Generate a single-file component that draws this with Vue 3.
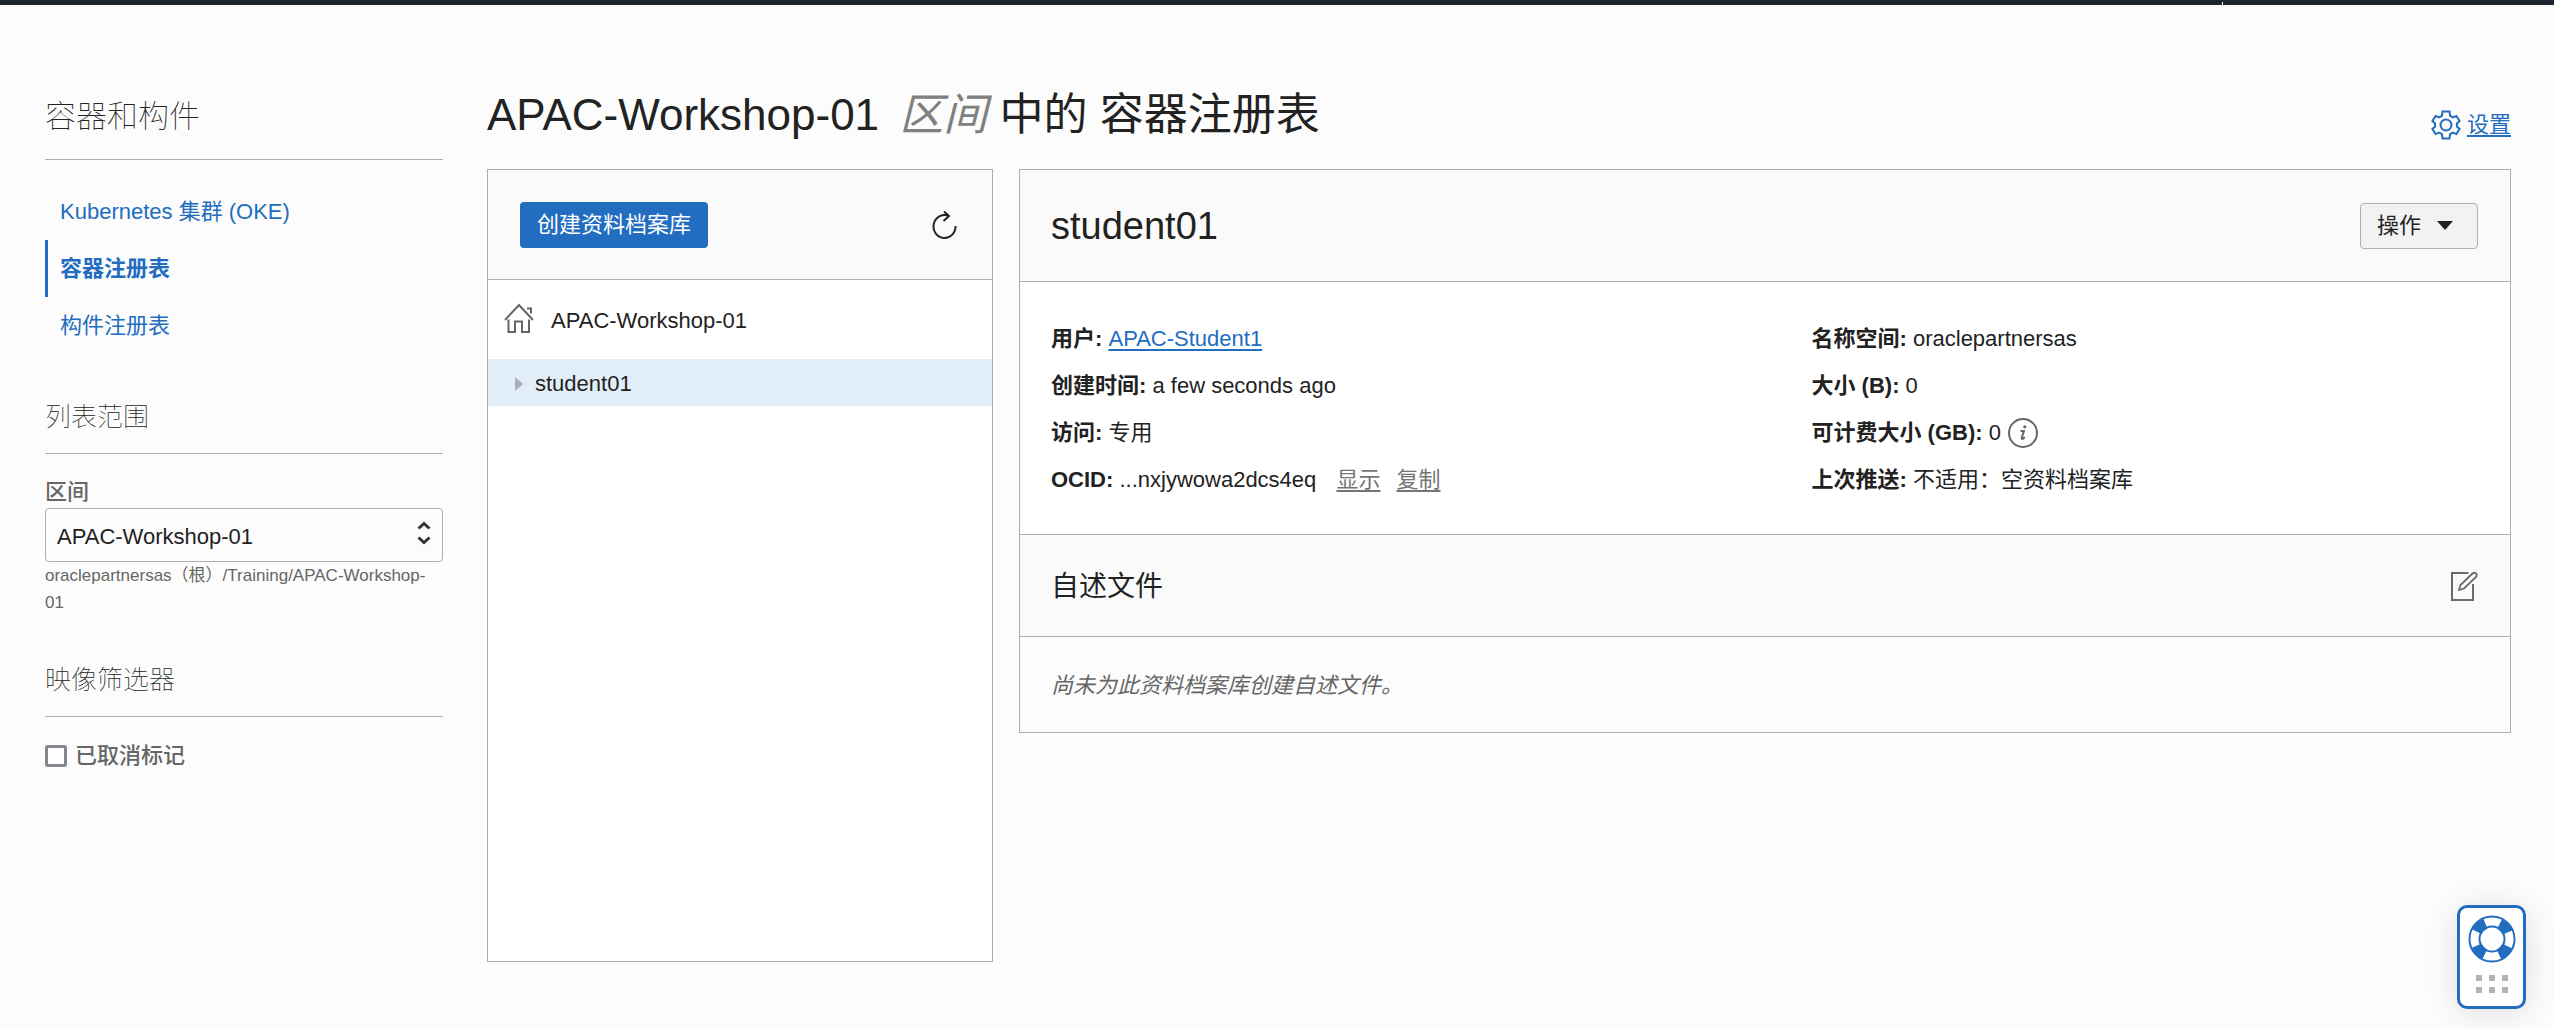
<script setup>
import { ref } from 'vue'

const services = [
  { label: 'Kubernetes 集群 (OKE)', active: false },
  { label: '容器注册表', active: true },
  { label: '构件注册表', active: false },
]
const compartments = ['APAC-Workshop-01']
const compartment = ref(compartments[0])
const untagged = ref(false)
</script>

<template>
  <div class="topbar"><span class="topbar-mark"></span></div>
  <div class="layout">
    <aside class="sidebar">
      <h2 class="side-title">容器和构件</h2>
      <nav class="side-nav">
        <a v-for="item in services" :key="item.label" href="#" :class="{ active: item.active }">{{ item.label }}</a>
      </nav>

      <h3 class="side-heading">列表范围</h3>
      <label class="field-label" for="compartment">区间</label>
      <div class="select-wrap">
        <select id="compartment" v-model="compartment">
          <option v-for="name in compartments" :key="name">{{ name }}</option>
        </select>
        <svg class="select-icon" width="14" height="24" viewBox="0 0 14 24" fill="none" stroke="#333" stroke-width="3">
          <path d="M1.500 7.500 7 2.500l5.500 5M1.500 16.500l5.500 5 5.500-5" />
        </svg>
      </div>
      <p class="hint">oraclepartnersas（根）/Training/APAC-Workshop-01</p>

      <h3 class="side-heading filters">映像筛选器</h3>
      <label class="check"><input v-model="untagged" type="checkbox" />已取消标记</label>
    </aside>

    <main class="main">
      <header class="page-head">
        <h1>APAC-Workshop-01 <em>区间</em> 中的 容器注册表</h1>
        <a class="settings" href="#">
          <svg width="30" height="30" viewBox="0 0 30 30" fill="none" stroke="#226dbf" stroke-width="2">
            <path d="M11.500 1.500h7l.6 4.400 2.800 1.500 3.500-1.500 3.200 5.200-2.700 2.300v3.200l2.700 2.300-3.200 5.200-3.500-1.500-2.800 1.500-.6 4.400h-7l-.6-4.400-2.800-1.500-3.500 1.500-3.200-5.200 2.700-2.300v-3.200l-2.700-2.300 3.200-5.200 3.500 1.500 2.800-1.500z" />
            <circle cx="15" cy="15" r="5.500" />
          </svg>
          <span>设置</span>
        </a>
      </header>

      <div class="panels">
        <section class="panel tree">
          <div class="tree-head">
            <button class="primary" type="button">创建资料档案库</button>
            <button class="icon-button" type="button" aria-label="刷新">
              <svg width="26" height="30" viewBox="0 0 26 30" fill="none" stroke="#222" stroke-width="2">
                <path d="M23.500 16A11 11.500 0 1 1 17 6M12 1.500l5 4.500-5.500 5" />
              </svg>
            </button>
          </div>
          <div class="tree-root">
            <svg width="30" height="30" viewBox="0 0 30 30" fill="none" stroke="#666" stroke-width="2">
              <path d="M1 17 15 2l14 15M23 5.500h4v5M4.500 16.500V29h6.500V18.500h7V29h7V16.500" />
            </svg>
            <span>APAC-Workshop-01</span>
          </div>
          <div class="tree-row">
            <svg width="8" height="14" viewBox="0 0 8 14" fill="#a8b1ba"><path d="M0 0l8 7-8 7z" /></svg>
            <span>student01</span>
          </div>
        </section>

        <section class="panel detail">
          <div class="detail-head">
            <h2>student01</h2>
            <button class="secondary" type="button">
              操作
              <svg width="16" height="9" viewBox="0 0 16 9" fill="#222"><path d="M0 0h16L8 9z" /></svg>
            </button>
          </div>
          <div class="facts">
            <div class="fact-col">
              <p><b>用户:</b> <a href="#">APAC-Student1</a></p>
              <p><b>创建时间:</b> a few seconds ago</p>
              <p><b>访问:</b> 专用</p>
              <p><b>OCID:</b> ...nxjywowa2dcs4eq <a class="muted" href="#">显示</a><a class="muted" href="#">复制</a></p>
            </div>
            <div class="fact-col">
              <p><b>名称空间:</b> oraclepartnersas</p>
              <p><b>大小 (B):</b> 0</p>
              <p class="with-icon">
                <span><b>可计费大小 (GB):</b> 0</span>
                <svg width="30" height="30" viewBox="0 0 30 30" fill="none" stroke="#666">
                  <circle cx="15" cy="15" r="14" stroke-width="2" />
                  <path d="M12.500 13h3.500l-2.200 6.500q-.4 1.800 1 1.300 1-.4 2-1.600" stroke-width="2" />
                  <circle cx="16.800" cy="8.800" r="1.600" fill="#666" stroke="none" />
                </svg>
              </p>
              <p><b>上次推送:</b> 不适用：空资料档案库</p>
            </div>
          </div>
          <div class="readme-head">
            <h3>自述文件</h3>
            <button class="icon-button" type="button" aria-label="编辑">
              <svg width="28" height="30" viewBox="0 0 28 30" fill="none" stroke="#6a6a6a" stroke-width="2">
                <path d="M18.500 2H2v27h21V13" />
                <path d="m9 19 1.500-5L22.500 2.500q2-1.500 3.500 0t0 3.500L14 17.500z" stroke-width="1.800" />
              </svg>
            </button>
          </div>
          <p class="readme-body">尚未为此资料档案库创建自述文件。</p>
        </section>
      </div>
    </main>
  </div>

  <button class="help" type="button" aria-label="帮助">
    <svg width="48" height="48" viewBox="0 0 48 48" fill="none" stroke="#226dbf">
      <circle cx="24" cy="24" r="17" stroke-width="11" stroke-dasharray="12 14.704" stroke-dashoffset="-7.352" />
      <circle cx="24" cy="24" r="22.500" stroke-width="2" />
      <circle cx="24" cy="24" r="12.500" stroke-width="2" />
    </svg>
    <span class="dots"><i v-for="n in 6" :key="n"></i></span>
  </button>
</template>

<style>
body {
  margin: 0;
  background: #fcfcfc;
}
</style>

<style scoped>
* {
  box-sizing: border-box;
}
.topbar,
.layout,
.help {
  font-family: "Liberation Sans", "Noto Sans CJK SC", sans-serif;
  font-size: 22px;
  line-height: 32px;
  color: #222;
}
h1,
h2,
h3,
p {
  margin: 0;
  font-weight: 400;
}
svg {
  display: block;
  flex: none;
}
button,
select {
  font: inherit;
  color: inherit;
}
a {
  color: #226dbf;
}
.topbar {
  display: flex;
  align-items: flex-end;
  justify-content: flex-end;
  height: 5px;
  padding-right: 331px;
  background: #1c242d;
}
.topbar-mark {
  width: 1px;
  height: 3px;
  background: #fff;
}
.layout {
  display: flex;
  gap: 44px;
  padding: 75px 43px 64px 45px;
}
.sidebar {
  flex: none;
  width: 398px;
}
.side-title {
  padding: 15px 0 20px;
  border-bottom: 1px solid #b0b0b0;
  font-size: 31px;
  font-weight: 100;
  line-height: 44px;
  color: #222;
}
.side-nav {
  display: flex;
  flex-direction: column;
  padding: 23px 0 31px;
}
.side-nav a {
  padding: 13px 0 12px 12px;
  border-left: 3px solid transparent;
  text-decoration: none;
}
.side-nav a.active {
  border-left-color: #226dbf;
  font-weight: 700;
}
.side-heading {
  padding: 12px 0 16px;
  border-bottom: 1px solid #a8b1ba;
  font-size: 26px;
  font-weight: 100;
  line-height: 40px;
  color: #222;
}
.field-label {
  display: block;
  padding-top: 22px;
  font-weight: 500;
  color: #666;
}
.select-wrap {
  position: relative;
}
.select-wrap select {
  display: block;
  width: 100%;
  height: 54px;
  padding: 4px 40px 0 11px;
  border: 1px solid #a8b1ba;
  border-radius: 4px;
  background: #fcfcfc;
  appearance: none;
}
.select-icon {
  position: absolute;
  top: 13px;
  right: 12px;
  pointer-events: none;
}
.hint {
  font-size: 17px;
  line-height: 27px;
  color: #666;
}
.filters {
  margin-top: 32px;
}
.check {
  display: flex;
  align-items: center;
  gap: 8px;
  padding-top: 23px;
  font-weight: 500;
  color: #666;
}
.check input {
  width: 22px;
  height: 22px;
  margin: 0;
  border: 3px solid #85858f;
  border-radius: 3px;
  background: #fff;
  appearance: none;
}
.check input:checked {
  background: #226dbf;
}
.main {
  flex: 1;
  min-width: 0;
}
.page-head {
  display: flex;
  justify-content: space-between;
  height: 89px;
}
h1 {
  font-size: 44px;
  line-height: 70px;
}
h1 em {
  margin-left: 8px;
  color: #808080;
}
.settings {
  display: flex;
  align-items: center;
  gap: 6px;
  height: 32px;
  margin-top: 29px;
  text-underline-offset: 3px;
}
.panels {
  display: flex;
  align-items: flex-start;
  gap: 26px;
}
.panel {
  border: 1px solid #a8b1ba;
}
.tree {
  flex: none;
  width: 506px;
  min-height: 793px;
  background: #fff;
}
.tree-head,
.detail-head,
.readme-head {
  display: flex;
  align-items: center;
  justify-content: space-between;
  padding: 0 32px 0 31px;
  border-bottom: 1px solid #a8b1ba;
  background: #fafafa;
}
.tree-head {
  height: 110px;
  padding: 0 34px 0 32px;
}
.primary {
  height: 46px;
  padding: 0 17px;
  border: 0;
  border-radius: 4px;
  background: #226dbf;
  color: #fff;
}
.icon-button {
  padding: 0;
  border: 0;
  background: none;
}
.tree-root {
  display: flex;
  gap: 17px;
  align-items: center;
  height: 79px;
  padding: 2px 0 0 16px;
}
.tree-root svg {
  margin-bottom: 6px;
}
.tree-row {
  display: flex;
  gap: 12px;
  align-items: center;
  height: 47px;
  padding: 2px 0 0 27px;
  background: #e2eef7;
}
.detail {
  flex: 1;
  min-width: 0;
}
.detail-head {
  height: 112px;
}
.detail-head h2 {
  font-size: 38px;
  line-height: 56px;
}
.secondary {
  display: flex;
  align-items: center;
  gap: 16px;
  height: 46px;
  padding: 0 24px 0 16px;
  border: 1px solid #a8b1ba;
  border-radius: 4px;
  background: #f2f2f2;
}
.facts {
  display: grid;
  grid-template-columns: 1fr 1fr;
  column-gap: 94px;
  padding: 33px 32px 31px 31px;
  border-bottom: 1px solid #a8b1ba;
  background: #fff;
}
.fact-col p {
  height: 47px;
  line-height: 47px;
}
.fact-col a {
  text-underline-offset: 3px;
}
.fact-col .muted {
  margin-left: 14px;
  color: #757575;
}
.fact-col .muted + .muted {
  margin-left: 16px;
}
.fact-col .with-icon {
  display: flex;
  align-items: center;
  gap: 7px;
}
.readme-head {
  height: 102px;
}
.readme-head h3 {
  padding-top: 2px;
  font-size: 28px;
  line-height: 40px;
}
.readme-body {
  padding: 33px 32px 30px 31px;
  font-style: italic;
  color: #666;
}
.help {
  position: fixed;
  right: 28px;
  bottom: 19px;
  display: flex;
  flex-direction: column;
  align-items: center;
  gap: 12px;
  width: 69px;
  height: 104px;
  padding: 7px 0 0;
  border: 3px solid #226dbf;
  border-radius: 10px;
  background: #fff;
  box-shadow: 0 4px 32px rgba(0, 0, 0, 0.12);
}
.dots {
  display: grid;
  grid-template-columns: repeat(3, 6px);
  gap: 6px 7px;
}
.dots i {
  height: 6px;
  background: #aeb4ba;
}
</style>
